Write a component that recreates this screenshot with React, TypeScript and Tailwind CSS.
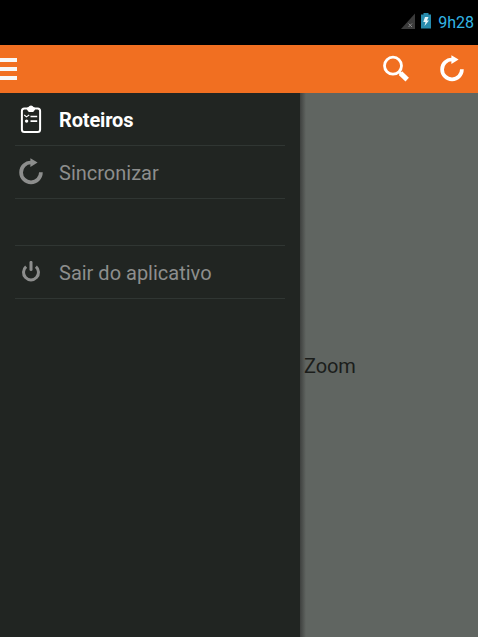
import type { ReactNode } from "react";

function RefreshIcon() {
  return (
    <svg width="26" height="28" viewBox="0 0 26 28" fill="none" className="block">
      <path d="M22.9 14.3A9.9 9.9 0 1 1 13 4.5" stroke="currentColor" strokeWidth="3.7" />
      <path d="M12.4 0.2L19.6 4.6L12.4 9Z" fill="currentColor" />
    </svg>
  );
}

function SearchIcon() {
  return (
    <svg width="28" height="28" viewBox="0 0 28 28" fill="none" className="block">
      <circle cx="11" cy="10.7" r="8.5" stroke="white" strokeWidth="2.8" />
      <path d="M17 16.7L19.5 19.2" stroke="white" strokeWidth="2.6" />
      <path d="M18.4 18.1L25.2 24.6" stroke="white" strokeWidth="5" />
    </svg>
  );
}

function ClipboardIcon() {
  return (
    <svg width="24" height="28" viewBox="0 0 24 28" fill="none" className="block">
      <rect x="2.9" y="3.5" width="18.2" height="23.4" rx="2.5" stroke="white" strokeWidth="2" />
      <path d="M8 3.8Q8 2.2 9.5 2.1Q10.2 0.4 12 0.4T14.5 2.1Q16 2.2 16 3.8V4.7L14.2 6.9H9.8L8 4.7Z" fill="white" />
      <path d="M5.3 10L7.4 11.9L10.2 10" stroke="white" strokeWidth="1.1" />
      <path d="M11.5 11.5H18.2M11.5 16.1H18.2" stroke="white" strokeWidth="1.6" />
      <circle cx="7.6" cy="16.1" r="1.7" fill="white" />
    </svg>
  );
}

function PowerIcon() {
  return (
    <svg width="20" height="22" viewBox="0 0 20 22" fill="none" className="block">
      <path d="M5.1 5.7A7.5 7.5 0 1 0 14.9 5.7" stroke="currentColor" strokeWidth="3" />
      <path d="M10 1.4V8.6" stroke="currentColor" strokeWidth="3" strokeLinecap="round" />
    </svg>
  );
}

function MenuRow({ icon, label, active = false }: { icon: ReactNode; label: string; active?: boolean }) {
  return (
    <li className={`flex h-[53px] items-center border-b border-[#303633] ${active ? "text-white" : "text-[#8d8e8d]"}`}>
      <span className="flex w-8 justify-center">{icon}</span>
      <span className={`ml-3 pt-0.5 text-[20px] leading-6 ${active ? "font-bold tracking-[-0.15px]" : ""}`}>{label}</span>
    </li>
  );
}

export default function App() {
  return (
    <div className="flex h-[637px] w-[478px] flex-col overflow-hidden bg-[#606561] font-['Roboto',sans-serif]">
      <div className="flex h-[45px] shrink-0 items-center justify-end bg-black pr-[4px]">
        <svg width="30" height="18" viewBox="0 0 30 18" className="mr-[7px] mb-[1px] block" fill="none">
          <path d="M0 16L14 0.5V16Z" fill="#3b3b3b" />
          <path d="M7.5 10.5L11 14M11 10.5L7.5 14" stroke="#8b8b8b" strokeWidth="1" />
          <path d="M20 1.5H22.5V0H27.5V1.5H30V15.5H20Z" fill="#288bac" />
          <path d="M24 4L27.5 4L26 7.5H28L23.5 13L24.5 9H22.3Z" fill="#e8f5f8" />
        </svg>
        <span className="text-[16px] leading-5 text-[#33b5e5]">9h28</span>
      </div>
      <header className="flex h-12 shrink-0 items-center justify-between bg-[#f16f21] pr-[13px] text-white">
        <div className="flex flex-col gap-[5px]">
          <span className="h-1 w-[17px] bg-[#f7f7f7]" />
          <span className="h-1 w-[17px] bg-[#f7f7f7]" />
          <span className="h-1 w-[17px] bg-[#f7f7f7]" />
        </div>
        <div className="flex items-center gap-[29px]">
          <SearchIcon />
          <RefreshIcon />
        </div>
      </header>
      <div className="flex flex-1">
        <nav className="w-[300px] bg-[#212522] px-[15px]">
          <ul>
            <MenuRow active icon={<ClipboardIcon />} label="Roteiros" />
            <MenuRow icon={<RefreshIcon />} label="Sincronizar" />
            <li className="h-[47px] border-b border-[#303633]" />
            <MenuRow icon={<PowerIcon />} label="Sair do aplicativo" />
          </ul>
        </nav>
        <main className="flex flex-1 items-center bg-[linear-gradient(to_right,#3e403e,#606561_6px)] pl-[4px]">
          <span className="pt-[1px] text-[20px] leading-6 tracking-[-0.1px] text-[#1b1d1b]">Zoom</span>
        </main>
      </div>
    </div>
  );
}
